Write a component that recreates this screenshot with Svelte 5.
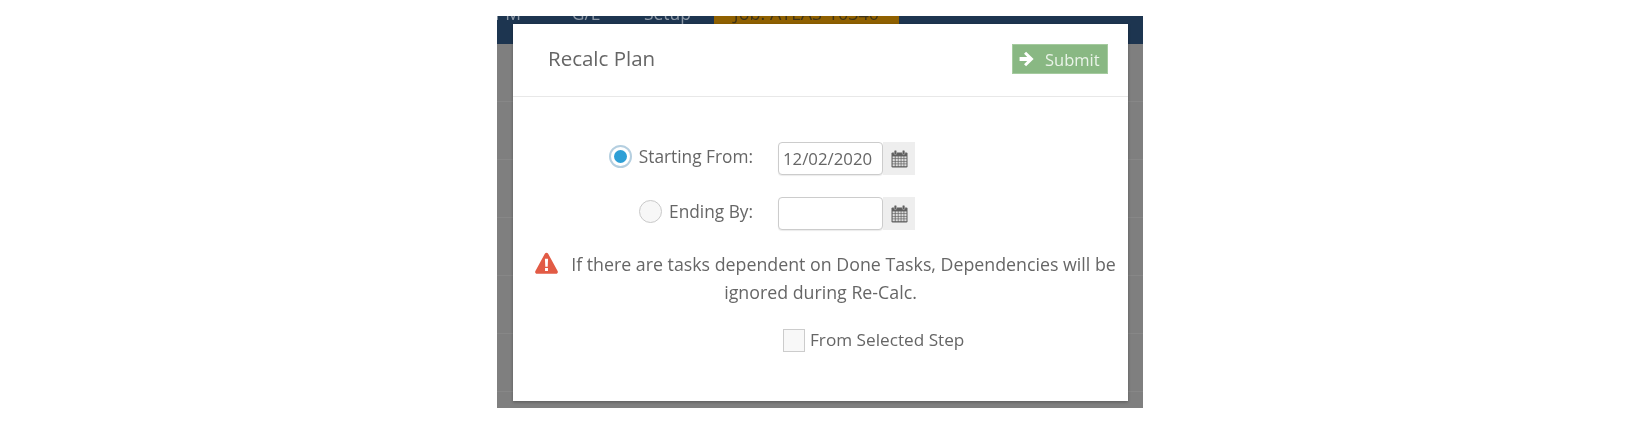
<script>
  const navItems = [
    { label: 'PM', w: 24 },
    { label: 'G/L', w: 79 },
    { label: 'Setup', w: 91 }
  ];
  const dates = [
    { label: 'Starting From:', value: '12/02/2020', checked: true },
    { label: 'Ending By:', value: '', checked: false }
  ];
  const lines = [0, 1, 2, 3, 4, 5];
</script>

<div class="stage">
  <nav class="nav">
    {#each navItems as item}
      <span class="nav-item" style="width:{item.w}px">{item.label}</span>
    {/each}
    <span class="nav-tab">Job: ATLAS-10340</span>
  </nav>
  <div class="rows">
    {#each lines as l}
      <div class="row"></div>
    {/each}
  </div>

  <section class="modal">
    <header class="head">
      <h1>Recalc Plan</h1>
      <button class="submit" type="button">
        <svg viewBox="0 0 14 14" width="16" height="16" aria-hidden="true">
          <path d="M0.5 5.2H7.2L4.4 2.4 6.2 0.6 12.8 7 6.2 13.4 4.4 11.6 7.2 8.8H0.5Z" fill="#fff" />
        </svg>
        Submit
      </button>
    </header>

    <div class="body">
      <div class="form">
        {#each dates as d}
          <div class="label-cell">
            <span class="radio" class:on={d.checked}></span>
            <span>{d.label}</span>
          </div>
          <div class="field">
            <input type="text" value={d.value} readonly />
            <span class="addon">
              <svg viewBox="0 0 17 18" width="17" height="18" aria-hidden="true">
                <rect x="0.5" y="2.4" width="16" height="15" rx="1.2" fill="#5f5f5f" />
                <rect x="3.2" y="0.3" width="2.4" height="4.2" rx="1" fill="#5f5f5f" stroke="#eee" stroke-width=".4" />
                <rect x="11.4" y="0.3" width="2.4" height="4.2" rx="1" fill="#5f5f5f" stroke="#eee" stroke-width=".4" />
                <g fill="#dcdcdc">
                  {#each [6.4, 9, 11.6, 14.2] as y}
                    {#each [1.6, 4.6, 7.5, 10.4, 13.3] as x}
                      <rect {x} {y} width="2.2" height="2" />
                    {/each}
                  {/each}
                </g>
              </svg>
            </span>
          </div>
        {/each}
      </div>

      <p class="msg">
        <svg class="warn" viewBox="0 0 22 21" width="23" height="22" aria-hidden="true">
          <path d="M11 0.6c.7 0 1.2.4 1.6 1l9 16.6c.7 1.3-.1 2.7-1.6 2.7H2c-1.5 0-2.3-1.4-1.6-2.7l9-16.6c.4-.6.9-1 1.6-1Z" fill="#e25b45" />
          <path d="M9.5 6.5h3l-.35 7.5h-2.3ZM9.6 15.4h2.8v2.8H9.6Z" fill="#fff" />
        </svg>If there are tasks dependent on Done Tasks, Dependencies will be ignored during Re-Calc.
      </p>

      <div class="check">
        <span class="box"></span>
        <span class="check-label">From Selected Step</span>
      </div>
    </div>
  </section>
</div>

<style>
  :global(body) {
    margin: 0;
    background: #fff;
  }

  .stage {
    position: relative;
    width: 646px;
    height: 392px;
    margin: 16px 0 0 497px;
    overflow: hidden;
    background: #7f7f7f;
    font-family: "Open Sans", sans-serif;
    color: #666;
    filter: blur(0.45px);
  }

  .nav {
    display: flex;
    height: 44px;
    margin-top: -16px;
    background: #1d3550;
    color: #8e9aa8;
    font-size: 17.5px;
    line-height: 27px;
  }

  .nav-item {
    display: flex;
    justify-content: flex-end;
    flex: none;
    white-space: nowrap;
  }

  .nav-tab {
    flex: none;
    width: 185px;
    height: 44px;
    margin-left: 23px;
    background: #8f6000;
    color: #3f3418;
    font-size: 18px;
    text-align: center;
    white-space: nowrap;
  }

  .rows {
    display: flex;
    flex-direction: column;
  }

  .row {
    height: 58px;
    box-sizing: border-box;
    border-bottom: 1px solid #878787;
  }

  .modal {
    position: absolute;
    left: 16px;
    top: 8px;
    width: 615px;
    height: 377px;
    background: #fff;
    box-shadow: 0 1px 3px rgba(0, 0, 0, 0.3);
  }

  .head {
    display: flex;
    align-items: center;
    justify-content: space-between;
    box-sizing: border-box;
    height: 73px;
    padding: 0 20px 2px 35px;
    border-bottom: 1px solid #e8e8e8;
  }

  h1 {
    margin: 0;
    padding-bottom: 2px;
    font-size: 20.5px;
    font-weight: 400;
    color: #666;
  }

  .submit {
    display: flex;
    align-items: center;
    gap: 10px;
    box-sizing: border-box;
    width: 96px;
    height: 30px;
    padding: 0 0 0 6px;
    border: 1px solid #a5cb9f;
    background: #89b883;
    color: #eaf3e8;
    font: 400 16.5px "Open Sans", sans-serif;
  }

  .body {
    padding-top: 45px;
  }

  .form {
    display: grid;
    grid-template-columns: 240px auto;
    column-gap: 25px;
    row-gap: 22px;
    justify-content: start;
  }

  .label-cell {
    display: flex;
    align-items: center;
    justify-content: flex-end;
    gap: 7px;
    padding-bottom: 5px;
    font-size: 17.3px;
  }

  .radio {
    position: relative;
    box-sizing: border-box;
    width: 23px;
    height: 23px;
    border-radius: 50%;
    border: 1px solid #c9c9c9;
    background: #f7f7f7;
  }

  .radio.on {
    border: 2px solid #b5cfe0;
    background: #fff;
  }

  .radio.on::after {
    content: "";
    position: absolute;
    inset: 3px;
    border-radius: 50%;
    background: #2d9fd6;
  }

  .field {
    display: flex;
    height: 33px;
  }

  input {
    box-sizing: border-box;
    width: 105px;
    height: 33px;
    padding: 0 4px;
    border: 1px solid #ccc;
    border-radius: 4px;
    outline: none;
    background: #fff;
    color: #666;
    font: 400 16.8px "Open Sans", sans-serif;
    box-shadow: 0 1px 1px rgba(0, 0, 0, 0.08);
  }

  .addon {
    display: flex;
    align-items: center;
    justify-content: center;
    width: 32px;
    background: #eee;
  }

  .msg {
    box-sizing: border-box;
    margin: 20px 0 0;
    padding: 0 10px;
    font-size: 17.8px;
    line-height: 28px;
    text-align: center;
  }

  .warn {
    margin: 0 13px 0 10px;
    vertical-align: -3px;
  }

  .check {
    display: flex;
    align-items: center;
    gap: 5px;
    height: 23px;
    margin: 23px 0 0 270px;
    font-size: 17.2px;
  }

  .check-label {
    padding-bottom: 2px;
  }

  .box {
    box-sizing: border-box;
    width: 22px;
    height: 23px;
    border: 1px solid #ccc;
    background: #f8f8f8;
  }
</style>
